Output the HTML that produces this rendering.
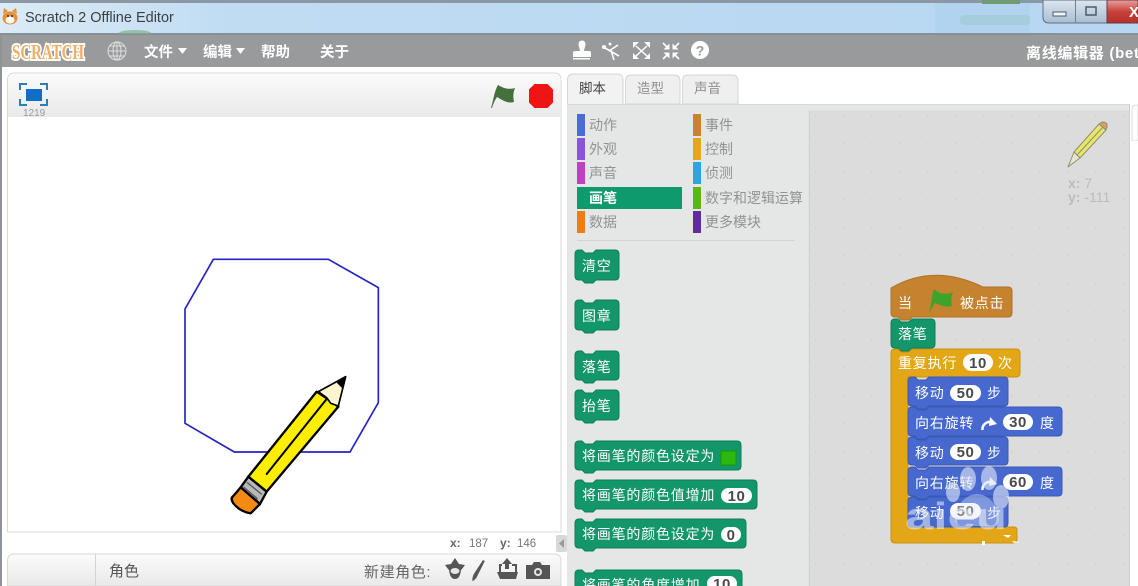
<!DOCTYPE html>
<html><head><meta charset="utf-8"><title>Scratch 2 Offline Editor</title>
<style>
html,body{margin:0;padding:0;background:#fff;width:1138px;height:586px;overflow:hidden}
svg{display:block;position:absolute;left:0;top:0;filter:blur(.35px)}
text{font-family:"Liberation Sans","Noto Sans CJK SC",sans-serif}
.m{font-size:14.500px;font-weight:700;fill:#fff}
.c{font-size:14px;fill:#929292}
.w{font-size:14px;fill:#fff;letter-spacing:.8px}
.n{font-size:15px;font-weight:700;fill:#4a4a4a;text-anchor:middle;font-family:"Liberation Sans",sans-serif;letter-spacing:.5px}
.g{fill:#14966b;stroke:#0d7f59;stroke-width:1}
.b{fill:#4668cf;stroke:#3a59b5;stroke-width:1}
</style></head><body>
<svg width="1138" height="586" viewBox="0 0 1138 586" xmlns="http://www.w3.org/2000/svg">
<defs>
<linearGradient id="tb" x1="0" x2="1" y1="0" y2="0"><stop offset="0" stop-color="#dcebf5"/><stop offset=".2" stop-color="#c0dcf3"/><stop offset="1" stop-color="#b7d6f2"/></linearGradient>
<linearGradient id="hd" x1="0" x2="0" y1="0" y2="1"><stop offset="0" stop-color="#fbfbfb"/><stop offset="1" stop-color="#e9e9e9"/></linearGradient>
<linearGradient id="cl" x1="0" x2="0" y1="0" y2="1"><stop offset="0" stop-color="#e8a0a0"/><stop offset=".5" stop-color="#c8423c"/><stop offset="1" stop-color="#b5302a"/></linearGradient>
<linearGradient id="wb" x1="0" x2="0" y1="0" y2="1"><stop offset="0" stop-color="#dbe6f0"/><stop offset="1" stop-color="#a9bdd1"/></linearGradient>
<pattern id="dots" width="28" height="28" patternUnits="userSpaceOnUse" x="815" y="115"><rect x="0" y="0" width="1.500" height="1.500" fill="#cfcfcf"/></pattern>
</defs>

<!-- title bar -->
<rect width="1138" height="34" fill="url(#tb)"/>
<rect width="1138" height="3" fill="#8b98a3"/>
<rect y="33" width="1138" height="1" fill="#7f93a6"/>
<rect x="935" y="3" width="95" height="30" fill="#a9cfee" opacity=".5"/>
<rect x="960" y="15" width="70" height="10" rx="4" fill="#9cc8c8" opacity=".5"/>
<rect x="982" y="0" width="38" height="4" fill="#6f9a72"/>
<ellipse cx="135" cy="33" rx="16" ry="3" fill="#7fb08a" opacity=".7"/>
<g>
<ellipse cx="10" cy="18" rx="7.500" ry="6.500" fill="#e8913a"/>
<path d="M3 14l1-6 4 3zM17 14l-1-6-4 3z" fill="#e8913a"/>
<ellipse cx="10" cy="20" rx="4.500" ry="3.500" fill="#fff"/>
<circle cx="8" cy="16" r="1" fill="#333"/><circle cx="12" cy="16" r="1" fill="#333"/>
</g>
<text x="25" y="22" font-size="14.500" fill="#3a3f44" style="font-family:'Liberation Sans',sans-serif">Scratch 2 Offline Editor</text>
<!-- window buttons -->
<path d="M1043 0H1107V23H1049Q1043 23 1043 17Z" fill="url(#wb)" stroke="#5f6f7f"/>
<path d="M1107 0H1138V23H1107Z" fill="url(#cl)" stroke="#6a3a3a"/>
<line x1="1075.500" y1="0" x2="1075.500" y2="23" stroke="#6f8294"/>
<rect x="1053" y="12" width="13" height="4" fill="#f2f5f8" stroke="#4d5a68"/>
<rect x="1086" y="7" width="10" height="8" fill="none" stroke="#4d5a68" stroke-width="1.500"/>
<text x="1129" y="17" font-size="15" font-weight="700" fill="#fff">X</text>

<!-- menu bar -->
<rect y="34" width="1138" height="33" fill="#999a9b"/>
<rect y="34" width="1138" height="1" fill="#8a8c8e"/>
<text x="12" y="59" font-size="21" font-weight="700" fill="#efb065" stroke="#fff" stroke-width="4" paint-order="stroke" textLength="72" lengthAdjust="spacingAndGlyphs" style="font-family:'Liberation Serif',serif">SCRATCH</text>
<g fill="none" stroke="#e0e0e0" stroke-width="1">
<circle cx="117" cy="51" r="9"/><ellipse cx="117" cy="51" rx="4" ry="9"/><path d="M108 51h18M109.500 46h15M109.500 56h15M117 42v18"/>
</g>
<text class="m" x="144" y="57">文件</text><path d="M178 48h9l-4.500 6z" fill="#fff"/>
<text class="m" x="203" y="57">编辑</text><path d="M236 48h9l-4.500 6z" fill="#fff"/>
<text class="m" x="261" y="57">帮助</text>
<text class="m" x="320" y="57">关于</text>
<text x="1026" y="58" font-size="15" font-weight="700" fill="#fff" letter-spacing=".7">离线编辑器 (beta)</text>
<!-- tool icons -->
<g fill="#fff">
<path d="M578.500 44a3.500 3.500 0 0 1 7 0c0 3-1.500 4-1.300 7h4.800q2 0 2 2v4h-18v-4q0-2 2-2h4.800c.2-3-1.300-4-1.300-7z"/>
<rect x="573" y="58" width="17" height="1.500"/>
<g stroke="#fff" stroke-width="1.600" fill="none"><path d="M605 48l14 8M618 45l-9 6M611 50l3 10"/></g>
<circle cx="604" cy="47" r="2"/><circle cx="610" cy="44" r="1.500"/>
<g stroke="#fff" stroke-width="1.500" fill="none"><path d="M636 46l11 10M647 46l-11 10"/></g>
<path d="M633 42h6l-6 6zM650 42h-6l6 6zM633 59h6l-6-6zM650 59h-6l6-6z"/>
<g stroke="#fff" stroke-width="1.600" fill="none"><path d="M663 43l5 5M679 43l-5 5M663 59l5-5M679 59l-5-5"/></g>
<path d="M669.500 49.500h-6l6-6zM672.500 49.500h6l-6-6zM669.500 52.500h-6l6 6zM672.500 52.500h6l-6 6z"/>
<circle cx="700" cy="50" r="9"/>
</g>
<text x="700" y="55.500" font-size="14" font-weight="700" fill="#999a9b" text-anchor="middle">?</text>

<!-- left window edge -->
<rect x="0" y="34" width="2" height="552" fill="#8f9396"/>

<!-- stage panel -->
<path d="M7.500 532V80q0-7 7-7H554q7 0 7 7V532Z" fill="#fff" stroke="#d9d9d9"/>
<path d="M8 117V80q0-6 6-6H554q6 0 6 6V117Z" fill="url(#hd)"/>
<g fill="none" stroke="#2a7fb8" stroke-width="2">
<path d="M20 90v-6h7M47 90v-6h-7M20 99v6h7M47 99v6h-7"/>
</g>
<rect x="26" y="89" width="16" height="12" fill="#0f6fc6"/>
<text x="23" y="116" font-size="10" fill="#9a9a9a" style="font-family:'Liberation Sans',sans-serif">1219</text>
<path d="M491 108C494 98 494 92 498 85C503 88 508 90 515 88C513 93 513 97 514 102C508 104 502 100 497 97C495 100 493 104 492 108Z" fill="#44703c"/>
<path d="M534.500 84H547.500L553 89.500V102.500L547.500 108H534.500L529 102.500V89.500Z" fill="#ee1515"/>

<!-- drawing on the stage -->
<g transform="translate(170 250) scale(.33333)">
<path d="M130 28H475L625 113V458L540 606H193L45 520V177Z" fill="none" stroke="#2323c4" stroke-width="5"/>
<g stroke="#000" stroke-width="7" stroke-linejoin="round" stroke-linecap="round">
<path d="M440 425L470 445L505 470L290 725L235 680Z" fill="#ffee00"/>
<path d="M235 680L290 725L270 762L212 712Z" fill="#b8b8b8"/>
<path d="M212 712L270 762L242 790Q210 785 190 760Q180 745 190 738Z" fill="#f58a12"/>
<path d="M445 425L527 380L505 468L482 460L470 443Z" fill="#fbf6cf" stroke-width="5"/>
<path d="M470 447L290 672" fill="none" stroke-width="6"/>
<path d="M222 712L262 746M232 698L274 732" fill="none" stroke="#555" stroke-width="4"/>
</g>
<path d="M529 378L500 398L520 418Z" fill="#000"/>
</g>

<text x="450" y="547" font-size="12" font-weight="700" fill="#666" style="font-family:'Liberation Sans',sans-serif">x:</text>
<text x="469" y="547" font-size="11.500" fill="#777" style="font-family:'Liberation Sans',sans-serif">187</text>
<text x="500" y="547" font-size="12" font-weight="700" fill="#666" style="font-family:'Liberation Sans',sans-serif">y:</text>
<text x="517" y="547" font-size="11.500" fill="#777" style="font-family:'Liberation Sans',sans-serif">146</text>
<rect x="556" y="535" width="11" height="17" rx="2" fill="#d8d8d8"/>
<path d="M564 539v9l-5-4.500z" fill="#9a9a9a"/>

<!-- sprite panel -->
<path d="M7.500 586V561q0-7 7-7H554q7 0 7 7V586Z" fill="url(#hd)" stroke="#d9d9d9"/>
<line x1="95.500" y1="554" x2="95.500" y2="586" stroke="#d4d4d4"/>
<text x="109" y="576" font-size="15" fill="#555">角色</text>
<text x="364" y="577" font-size="15" fill="#666" letter-spacing=".6">新建角色:</text>
<g fill="#555">
<path d="M455 558l4 6 6 1-3 4-1 1q-1 9-6 9t-6-9l-1-1-3-4 6-1z"/>
<ellipse cx="455" cy="571" rx="4.500" ry="3" fill="#e8e8e8"/>
<path d="M483 560l1.800 1-7 14q-2 5-5.500 6 0-4 1.500-7z"/>
<path d="M507 558l5 6h-3v5h-4v-5h-3z"/>
<path d="M499 564h3v2h-1v6h-2zM512 564h5v8h-2v-6h-3z"/>
<path d="M497 572h21l-2 7h-16z"/>
<path d="M526 565h6l2-3h6l2 3h8v14h-24z"/>
</g>
<circle cx="538" cy="572" r="4" fill="#e6e6e6"/>
<circle cx="538" cy="572" r="2" fill="#555"/>

<!-- tabs -->
<path d="M567.500 105V80q0-6 6-6H617q6 0 6 6V105Z" fill="#f2f2f2" stroke="#d6d6d6"/>
<path d="M625.500 104V81q0-6 6-6H674q6 0 6 6V104Z" fill="#efefef" stroke="#d6d6d6"/>
<path d="M682.500 104V81q0-6 6-6H732q6 0 6 6V104Z" fill="#efefef" stroke="#d6d6d6"/>
<text x="579" y="93" font-size="13.500" fill="#444">脚本</text>
<text x="637" y="93" font-size="13.500" fill="#8f8f8f">造型</text>
<text x="694" y="93" font-size="13.500" fill="#8f8f8f">声音</text>

<!-- palette -->
<rect x="567" y="105" width="241" height="481" fill="#e5e7e7"/>
<rect x="567" y="104" width="563" height="1" fill="#d8d8d8"/>
<rect x="808" y="105" width="322" height="5" fill="#e5e7e7"/>
<rect x="577" y="114" width="8" height="22" fill="#4a6cd4"/>
<rect x="577" y="138" width="8" height="22" fill="#8a55d7"/>
<rect x="577" y="162" width="8" height="22" fill="#bb42c3"/>
<rect x="577" y="187" width="105" height="22" fill="#0e9a6c"/>
<rect x="577" y="211" width="8" height="22" fill="#ee7d16"/>
<rect x="693" y="114" width="8" height="22" fill="#c88330"/>
<rect x="693" y="138" width="8" height="22" fill="#e1a91a"/>
<rect x="693" y="162" width="8" height="22" fill="#2ca5e2"/>
<rect x="693" y="187" width="8" height="22" fill="#5cb712"/>
<rect x="693" y="211" width="8" height="22" fill="#632d99"/>
<text class="c" x="589" y="130">动作</text>
<text class="c" x="589" y="154">外观</text>
<text class="c" x="589" y="178">声音</text>
<text x="589" y="203" font-size="14" font-weight="700" fill="#fff">画笔</text>
<text class="c" x="589" y="227">数据</text>
<text class="c" x="705" y="130">事件</text>
<text class="c" x="705" y="154">控制</text>
<text class="c" x="705" y="178">侦测</text>
<text class="c" x="705" y="203">数字和逻辑运算</text>
<text class="c" x="705" y="227">更多模块</text>
<rect x="577" y="240" width="218" height="1" fill="#d2d4d4"/>

<!-- palette blocks -->
<path class="g" d="M575 254q0-4 4-4h3l3 3h8l3-3H615q4 0 4 4v22q0 4-4 4H596l-3 3h-8l-3-3H579q-4 0-4-4z"/>
<text class="w" x="582" y="271">清空</text>
<path class="g" d="M575 304q0-4 4-4h3l3 3h8l3-3H615q4 0 4 4v22q0 4-4 4H596l-3 3h-8l-3-3H579q-4 0-4-4z"/>
<text class="w" x="582" y="321">图章</text>
<path class="g" d="M575 355q0-4 4-4h3l3 3h8l3-3H615q4 0 4 4v21q0 4-4 4H596l-3 3h-8l-3-3H579q-4 0-4-4z"/>
<text class="w" x="582" y="372">落笔</text>
<path class="g" d="M575 394q0-4 4-4h3l3 3h8l3-3H615q4 0 4 4v22q0 4-4 4H596l-3 3h-8l-3-3H579q-4 0-4-4z"/>
<text class="w" x="582" y="411">抬笔</text>
<path class="g" d="M575 445q0-4 4-4h3l3 3h8l3-3H737q4 0 4 4v21q0 4-4 4H596l-3 3h-8l-3-3H579q-4 0-4-4z"/>
<text class="w" x="582" y="461">将画笔的颜色设定为</text>
<rect x="721" y="451" width="15" height="14" fill="#2db80f" stroke="#169a08"/>
<path class="g" d="M575 484q0-4 4-4h3l3 3h8l3-3H753q4 0 4 4v21q0 4-4 4H596l-3 3h-8l-3-3H579q-4 0-4-4z"/>
<text class="w" x="582" y="500">将画笔的颜色值增加</text>
<rect x="721" y="488" width="31" height="15" rx="7.500" fill="#fff"/><text class="n" x="736.500" y="501">10</text>
<path class="g" d="M575 523q0-4 4-4h3l3 3h8l3-3H742q4 0 4 4v21q0 4-4 4H596l-3 3h-8l-3-3H579q-4 0-4-4z"/>
<text class="w" x="582" y="539">将画笔的颜色设定为</text>
<rect x="721" y="527" width="20" height="15" rx="7.500" fill="#fff"/><text class="n" x="731" y="540">0</text>
<path class="g" d="M575 574q0-4 4-4h3l3 3h8l3-3H738q4 0 4 4v30H575z"/>
<text class="w" x="582" y="590">将画笔的角度增加</text>
<rect x="707" y="576" width="30" height="15" rx="7.500" fill="#fff"/><text class="n" x="722" y="589">10</text>

<!-- scripts area -->
<rect x="809" y="110" width="320" height="476" fill="#dcdcdc"/>
<rect x="809" y="110" width="320" height="476" fill="url(#dots)"/>
<rect x="808.500" y="110" width="1" height="476" fill="#c4c4c4"/>
<rect x="1129" y="105" width="1" height="481" fill="#cfcfcf"/>
<path d="M1138 105h-2q-4 0-4 5V141h6z" fill="#fff" stroke="#dcdcdc"/>
<rect x="1132" y="141" width="6" height="445" fill="#fff"/>

<!-- ghost pencil -->
<g stroke="#8f8f70" stroke-width="1" stroke-linejoin="round">
<path d="M1074 152L1099 124L1106 130L1080 158Z" fill="#e6e66a"/>
<path d="M1099 124L1102 122Q1106 122 1107 124L1107 127L1106 130Z" fill="#dd9a70"/>
<path d="M1074 152L1080 158L1068 167Z" fill="#e4e4d0"/>
<path d="M1077 155L1103 127" fill="none"/>
</g>
<text x="1068" y="188" font-size="14" fill="#bcbcbc" style="font-family:'Liberation Sans',sans-serif"><tspan font-weight="700">x:</tspan> 7</text>
<text x="1068" y="202" font-size="14" fill="#bcbcbc" style="font-family:'Liberation Sans',sans-serif"><tspan font-weight="700">y:</tspan> -111</text>

<!-- script stack -->
<path d="M891 288Q934 263 983 287H1008q4 0 4 4v22q0 4-4 4H912l-3 3h-8l-3-3H895q-4 0-4-4z" fill="#c58330" stroke="#b07226"/>
<text class="w" x="898" y="308">当</text>
<path d="M929 312C932 303 931 297 934 289C939 294 946 295 953 292C951 297 951 302 952 306C946 308 940 305 935 303C933 306 931 309 930 312Z" fill="#3fa22a"/>
<text class="w" x="960" y="308">被点击</text>
<path class="g" d="M891 323q0-4 4-4h3l3 3h8l3-3H931q4 0 4 4v21q0 4-4 4H912l-3 3h-8l-3-3H895q-4 0-4-4z"/>
<text class="w" x="898" y="339">落笔</text>
<path d="M891 353q0-4 4-4h3l3 3h8l3-3H1016q4 0 4 4v20q0 4-4 4H908V527H1014q3 0 3 3v9q0 4-4 4H895q-4 0-4-4z" fill="#e2a616" stroke="#c99210"/>
<text class="w" x="898" y="368">重复执行</text>
<rect x="963" y="354" width="30" height="17" rx="8.500" fill="#fff"/><text class="n" x="978" y="368">10</text>
<text class="w" x="998" y="368">次</text>

<path class="b" d="M908 381q0-4 4-4h3l3 3h8l3-3H1004q4 0 4 4v21q0 4-4 4H929l-3 3h-8l-3-3H912q-4 0-4-4z"/>
<text class="w" x="915" y="398">移动</text>
<rect x="950" y="385" width="31" height="16" rx="8" fill="#fff"/><text class="n" x="965.500" y="398">50</text>
<text class="w" x="987" y="398">步</text>

<path class="b" d="M908 411q0-4 4-4h3l3 3h8l3-3H1058q4 0 4 4v21q0 4-4 4H929l-3 3h-8l-3-3H912q-4 0-4-4z"/>
<text class="w" x="915" y="428">向右旋转</text>
<path d="M982.500 430a7.500 7.500 0 0 1 9-8" fill="none" stroke="#fff" stroke-width="2.500"/><path d="M990 417l7 7-8 2z" fill="#fff"/>
<rect x="1003" y="414" width="30" height="16" rx="8" fill="#fff"/><text class="n" x="1018" y="427">30</text>
<text class="w" x="1040" y="428">度</text>

<path class="b" d="M908 441q0-4 4-4h3l3 3h8l3-3H1004q4 0 4 4v20q0 4-4 4H929l-3 3h-8l-3-3H912q-4 0-4-4z"/>
<text class="w" x="915" y="458">移动</text>
<rect x="950" y="444" width="31" height="16" rx="8" fill="#fff"/><text class="n" x="965.500" y="457">50</text>
<text class="w" x="987" y="458">步</text>

<path class="b" d="M908 471q0-4 4-4h3l3 3h8l3-3H1058q4 0 4 4v21q0 4-4 4H929l-3 3h-8l-3-3H912q-4 0-4-4z"/>
<text class="w" x="915" y="488">向右旋转</text>
<path d="M982.500 490a7.500 7.500 0 0 1 9-8" fill="none" stroke="#fff" stroke-width="2.500"/><path d="M990 477l7 7-8 2z" fill="#fff"/>
<rect x="1003" y="474" width="30" height="16" rx="8" fill="#fff"/><text class="n" x="1018" y="487">60</text>
<text class="w" x="1040" y="488">度</text>

<path class="b" d="M908 501q0-4 4-4h3l3 3h8l3-3H1004q4 0 4 4v22q0 4-4 4H912q-4 0-4-4z"/>
<text class="w" x="915" y="518">移动</text>
<rect x="950" y="503" width="31" height="16" rx="8" fill="#fff"/><text class="n" x="965.500" y="516">50</text>
<text class="w" x="987" y="518">步</text>

<!-- watermark -->
<g fill="#dfe6f6" opacity=".62">
<ellipse cx="968" cy="479" rx="8" ry="12"/>
<ellipse cx="989" cy="478" rx="8" ry="12"/>
<ellipse cx="1001" cy="497" rx="8" ry="12"/>
<ellipse cx="953" cy="492" rx="7" ry="10"/>
<path d="M977 494c12 0 22 13 22 24 0 10-10 8-22 8s-22 2-22-8c0-11 10-24 22-24z" opacity=".6"/>
</g>
<text x="905" y="529" font-size="38" font-weight="700" fill="#eef1f8" opacity=".55" textLength="102" lengthAdjust="spacingAndGlyphs" style="font-family:'Liberation Sans',sans-serif">aieu</text>
<path d="M1003 535l8 0-3 3zM1012 541l8 1-6 1zM982 541h3v4h-3z" fill="#fff"/>
</svg>
</body></html>
